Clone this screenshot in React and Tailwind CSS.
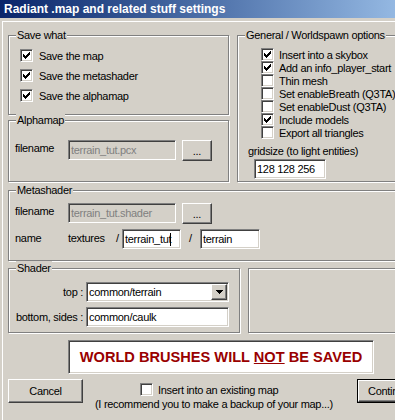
import React from 'react';

// classic 3D edges
const SUNKEN =
  'border border-t-[#808080] border-l-[#808080] border-b-white border-r-white shadow-[inset_1px_1px_0_#404040,inset_-1px_-1px_0_#d4d0c8]';
const RAISED =
  'border border-t-white border-l-white border-b-[#404040] border-r-[#404040] shadow-[inset_-1px_-1px_0_#808080]';
const ETCHED = 'relative border border-[#808080] shadow-[inset_1px_1px_0_#fff,1px_1px_0_#fff]';

const GENERAL = [
  ['Insert into a skybox', true],
  ['Add an info_player_start', true],
  ['Thin mesh', false],
  ['Set enableBreath (Q3TA)', false],
  ['Set enableDust (Q3TA)', false],
  ['Include models', true],
  ['Export all triangles', false],
];

function Check({ checked }) {
  return (
    <span className={`block w-[13px] h-[13px] shrink-0 bg-white ${SUNKEN}`}>
      {checked && (
        <svg width="11" height="11" viewBox="0 0 11 11" shapeRendering="crispEdges">
          <rect x="8" y="2" width="1" height="1" />
          <rect x="7" y="3" width="2" height="1" />
          <rect x="2" y="4" width="1" height="1" />
          <rect x="6" y="4" width="3" height="1" />
          <rect x="2" y="5" width="2" height="1" />
          <rect x="5" y="5" width="3" height="1" />
          <rect x="2" y="6" width="5" height="1" />
          <rect x="3" y="7" width="3" height="1" />
          <rect x="4" y="8" width="1" height="1" />
        </svg>
      )}
    </span>
  );
}

function Group({ label, className = '', children }) {
  return (
    <div className={`${ETCHED} shrink-0 ${className}`}>
      {label && (
        <span className="absolute -top-[8px] left-[7px] px-[1px] bg-[#d4d0c8] whitespace-nowrap">{label}</span>
      )}
      {children}
    </div>
  );
}

function Field({ value, disabled, caret, className = '' }) {
  return (
    <div
      className={`h-[20px] shrink-0 flex items-center pl-[2px] overflow-hidden whitespace-nowrap ${SUNKEN} ${
        disabled ? 'bg-[#d4d0c8] text-[#808080]' : 'bg-white'
      } ${className}`}
    >
      <span>{value}</span>
      {caret && <span className="inline-block w-[1px] h-[13px] -ml-[1px] bg-black" />}
    </div>
  );
}

function Btn({ children, className = '' }) {
  return (
    <div className={`flex items-center justify-center shrink-0 bg-[#d4d0c8] ${RAISED} ${className}`}>{children}</div>
  );
}

function Combo({ value, className = '' }) {
  return (
    <div className={`h-[20px] shrink-0 flex p-[1px] bg-white ${SUNKEN} ${className}`}>
      <span className="flex-1 flex items-center pl-[1px] whitespace-nowrap overflow-hidden">{value}</span>
      <Btn className="w-[16px] h-[16px]">
        <svg width="7" height="4" viewBox="0 0 7 4" shapeRendering="crispEdges">
          <rect x="0" y="0" width="7" height="1" />
          <rect x="1" y="1" width="5" height="1" />
          <rect x="2" y="2" width="3" height="1" />
          <rect x="3" y="3" width="1" height="1" />
        </svg>
      </Btn>
    </div>
  );
}

export default function App() {
  return (
    <div className="w-[395px] h-[420px] overflow-hidden bg-[#d4d0c8]">
      <div className="w-[440px] font-['Liberation_Sans',Arial,sans-serif] text-[11px] tracking-[-0.3px] leading-[14px] text-black">
        {/* title bar */}
        <div className="h-[18px] flex items-center pl-[4px] bg-linear-to-r from-[#0a246a] to-[#a6caf0] text-white font-bold text-[12px] tracking-normal whitespace-nowrap">
          Radiant .map and related stuff settings
        </div>

        <div className="mt-[3px] ml-[2px] h-[400px] border-l border-t border-white">
          {/* top row */}
          <div className="mt-[13px] flex items-start">
            <div className="ml-[5px] flex flex-col">
              <Group label="Save what" className="w-[221px] h-[80px] pt-[13px] pl-[11px] flex flex-col gap-[7px]">
                {['Save the map', 'Save the metashader', 'Save the alphamap'].map((t) => (
                  <div key={t} className="flex items-center h-[13px] gap-[6px] whitespace-nowrap">
                    <Check checked />
                    <span>{t}</span>
                  </div>
                ))}
              </Group>

              <Group label="Alphamap" className="mt-[5px] w-[221px] h-[62px] pt-[19px] pl-[6px]">
                <div className="flex items-start">
                  <span className="w-[53px] mt-[1px]">filename</span>
                  <Field disabled value="terrain_tut.pcx" className="w-[108px]" />
                  <Btn className="ml-[6px] w-[30px] h-[21px]">...</Btn>
                </div>
              </Group>
            </div>

            <Group
              label="General / Worldspawn options"
              className="ml-[8px] w-[196px] h-[147px] pt-[12px] pl-[23px]"
            >
              {GENERAL.map(([t, c]) => (
                <div key={t} className="flex items-center h-[13px] gap-[5px] whitespace-nowrap">
                  <Check checked={c} />
                  <span>{t}</span>
                </div>
              ))}
              <div className="mt-[5px] -ml-[13px] whitespace-nowrap">gridsize (to light entities)</div>
              <Field value="128 128 256" className="mt-[1px] -ml-[7px] w-[72px]" />
            </Group>
          </div>

          {/* metashader */}
          <Group label="Metashader" className="mt-[8px] ml-[5px] w-[425px] h-[71px] pt-[12px] pl-[6px]">
            <div className="flex items-start">
              <span className="w-[53px] mt-[1px]">filename</span>
              <Field disabled value="terrain_tut.shader" className="w-[108px]" />
              <Btn className="ml-[6px] w-[30px] h-[21px]">...</Btn>
            </div>
            <div className="mt-[5px] flex items-start">
              <span className="w-[53px] mt-[2px]">name</span>
              <span className="w-[48px] mt-[2px]">textures</span>
              <span className="w-[6px] mt-[2px]">/</span>
              <Field value="terrain_tut" caret className="w-[59px]" />
              <span className="ml-[8px] w-[11px] mt-[2px]">/</span>
              <Field value="terrain" className="w-[60px]" />
            </div>
          </Group>

          {/* shader + empty panel */}
          <div className="mt-[7px] ml-[5px] flex">
            <Group label="Shader" className="w-[232px] h-[65px] pt-[13px] pl-[5px] flex flex-col gap-[5px]">
              <div className="flex items-center h-[20px]">
                <span className="w-[69px] text-right">top :</span>
                <Combo value="common/terrain" className="ml-[3px] w-[143px]" />
              </div>
              <div className="flex items-center h-[20px]">
                <span className="w-[69px] text-right whitespace-nowrap">bottom, sides :</span>
                <Field value="common/caulk" className="ml-[3px] w-[143px]" />
              </div>
            </Group>
            <Group className="ml-[8px] w-[184px] h-[65px]" />
          </div>

          {/* warning */}
          <div
            className={`mt-[7px] ml-[65px] w-[306px] h-[34px] bg-white flex items-center justify-center ${SUNKEN} font-bold text-[14.6px] tracking-normal text-[#990000] whitespace-nowrap`}
          >
            <span>
              WORLD BRUSHES WILL <span className="underline">NOT</span> BE SAVED
            </span>
          </div>

          {/* buttons */}
          <div className="mt-[5px] ml-[5px] flex items-start">
            <Btn className="w-[75px] h-[24px]">Cancel</Btn>
            <div className="ml-[12px] w-[262px] mt-[4px] shrink-0">
              <div className="flex items-center h-[13px] pl-[45px] gap-[5px] whitespace-nowrap">
                <Check />
                <span>Insert into an existing map</span>
              </div>
              <div className="mt-[1px] whitespace-nowrap">(I recommend you to make a backup of your map...)</div>
            </div>
            <div className="w-[75px] h-[24px] shrink-0 border border-black">
              <Btn className="w-full h-full justify-start pl-[9px]">Continue</Btn>
            </div>
          </div>
        </div>
      </div>
    </div>
  );
}
